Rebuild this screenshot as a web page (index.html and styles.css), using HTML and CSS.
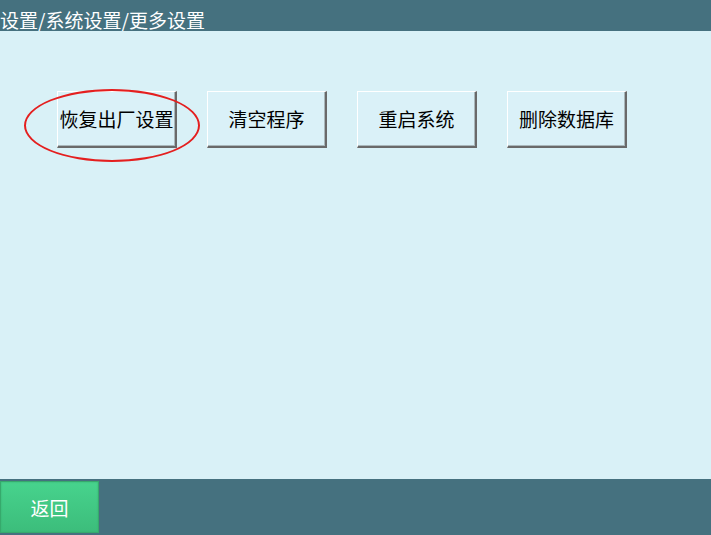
FILE: index.html
```html
<!DOCTYPE html>
<html lang="zh">
<head>
    <meta charset="UTF-8" />
    <title>更多设置</title>
    <link rel="stylesheet" href="styles.css">
</head>
<body>
    <div class="page">
        <div class="title-bar">设置/系统设置/更多设置</div>

        <div class="content">
            <div class="btn-row">
                <div class="btn-wrap">
                    <button class="panel-btn">恢复出厂设置</button>
                    <div class="mark"></div>
                </div>
                <button class="panel-btn">清空程序</button>
                <button class="panel-btn">重启系统</button>
                <button class="panel-btn">删除数据库</button>
            </div>
        </div>

        <div class="bottom-bar">
            <button class="back-btn">返回</button>
        </div>
    </div>
</body>
</html>
```

FILE: styles.css
```css
html, body {
    margin: 0;
    padding: 0;
}

body {
    font-family: "Noto Sans CJK SC", "Noto Sans", sans-serif;
    background-color: #d9f1f7;
}

.page {
    width: 711px;
    height: 535px;
    display: flex;
    flex-direction: column;
}

.title-bar {
    height: 31px;
    box-sizing: border-box;
    padding-top: 9px;
    background-color: #45717f;
    color: #fff;
    font-size: 19px;
    line-height: 21px;
    white-space: nowrap;
}

.content {
    flex: 1;
    background-color: #d9f1f7;
}

.btn-row {
    display: flex;
    gap: 30px;
    padding: 60px 0 0 57px;
}

.btn-wrap {
    position: relative;
}

.panel-btn {
    width: 120px;
    height: 57px;
    padding: 0 0 2px;
    background-color: #daf1f8;
    border-top: 1px solid #ffffff;
    border-left: 1px solid #ffffff;
    border-right: 2px solid #6a6a6a;
    border-bottom: 2px solid #6a6a6a;
    box-shadow: inset -1px -1px 0 #a9b7bb;
    font-family: "Noto Sans CJK SC", "Noto Sans", sans-serif;
    font-size: 19px;
    color: #000;
    display: block;
}

.mark {
    position: absolute;
    left: -33px;
    top: -2px;
    width: 172px;
    height: 69px;
    border: 2px solid #e41f1f;
    border-radius: 50%;
    pointer-events: none;
}

.bottom-bar {
    height: 56px;
    background-color: #45717f;
    padding-top: 2px;
    box-sizing: border-box;
}

.back-btn {
    width: 99px;
    height: 52px;
    background: linear-gradient(#47d38d, #3cbd7b);
    border: 1px solid #36a96c;
    box-shadow: inset 0 0 2px #38b070;
    color: #fff;
    font-family: "Noto Sans CJK SC", "Noto Sans", sans-serif;
    font-size: 19px;
    display: block;
}
```
